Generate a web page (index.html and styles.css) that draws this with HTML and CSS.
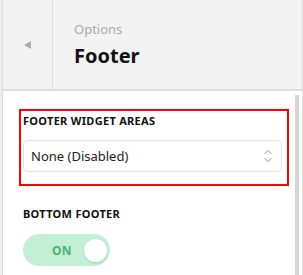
FILE: index.html
```html
<!DOCTYPE html>
<html lang="en">
<head>
  <meta charset="UTF-8">
  <title>Footer Options</title>
  <link rel="stylesheet" href="styles.css">
</head>
<body>
  <div class="panel">
    <div class="header">
      <div class="back">
        <svg width="8" height="8" viewBox="0 0 8 8"><polygon points="7,0 7,8 0,4" fill="#aaa"/></svg>
      </div>
      <div class="title">
        <div class="crumb">Options</div>
        <h1>Footer</h1>
      </div>
    </div>
    <div class="body">
      <div class="content">
        <div class="field highlight">
          <div class="label">Footer Widget Areas</div>
          <div class="select">
            <span>None (Disabled)</span>
            <svg width="10" height="14" viewBox="0 0 10 14"><polyline points="1.5,5 5,1.5 8.5,5" fill="none" stroke="#c4c4c4" stroke-width="1.4"/><polyline points="1.5,9 5,12.5 8.5,9" fill="none" stroke="#c4c4c4" stroke-width="1.4"/></svg>
          </div>
        </div>
        <div class="field">
          <div class="label">Bottom Footer</div>
          <div class="toggle">
            <span>ON</span>
            <i class="knob"></i>
          </div>
        </div>
      </div>
      <div class="scrollbar"></div>
    </div>
  </div>
</body>
</html>
```

FILE: styles.css
```css
body {
  margin: 0;
  background: #ededed;
  font-family: "Noto Sans", "Open Sans", sans-serif;
  color: #222;
}
.panel {
  margin-left: 2px;
  border-left: 1px solid #dcdcdc;
  border-right: 1px solid #dcdcdc;
  width: 299px;
  height: 275px;
  background: #fff;
  overflow: hidden;
}
.header {
  display: flex;
  height: 89px;
  background: #f3f3f3;
  border-bottom: 2px solid #dedede;
}
.back {
  width: 49px;
  border-right: 1px solid #dedede;
  display: flex;
  align-items: center;
  justify-content: center;
}
.title {
  padding: 20px 0 0 21px;
}
.crumb {
  font-size: 13px;
  color: #aaa;
  line-height: 18px;
}
h1 {
  margin: 6px 0 0;
  font-size: 20px;
  font-weight: 700;
  color: #111;
  line-height: 24px;
}
.body {
  display: flex;
}
.content {
  flex: 1;
  padding: 18px 0 0 15px;
}
.scrollbar {
  width: 4px;
  margin: 4px 3px 0 0;
  height: 190px;
  background: #d6d6d6;
}
.field {
  width: 260px;
  padding: 0 3px 12px 5px;
}
.highlight {
  border: 2px solid #ff0000;
  margin-left: 1px;
  width: 259px;
  padding: 2px 5px 12px 2px;
}
.field + .field {
  margin-top: 20px;
}
.label {
  font-size: 11px;
  font-weight: 700;
  text-transform: uppercase;
  letter-spacing: 0.3px;
  color: #111;
  line-height: 16px;
}
.select {
  margin-top: 11px;
  height: 30px;
  border: 1px solid #e2e2e2;
  border-radius: 4px;
  display: flex;
  align-items: center;
  justify-content: space-between;
  padding: 0 8px 0 7px;
  font-size: 13px;
  color: #222;
}
.toggle {
  margin-top: 12px;
  width: 87px;
  height: 32px;
  border-radius: 16px;
  background: #c3efd4;
  display: flex;
  align-items: center;
  justify-content: space-between;
  padding: 0 3px 0 29px;
  box-sizing: border-box;
}
.toggle span {
  font-size: 12px;
  font-weight: 700;
  color: #4bb46e;
  letter-spacing: 0.3px;
}
.knob {
  width: 23px;
  height: 23px;
  border-radius: 50%;
  background: #fff;
  box-shadow: 0 1px 2px rgba(0,0,0,0.15);
}
```
